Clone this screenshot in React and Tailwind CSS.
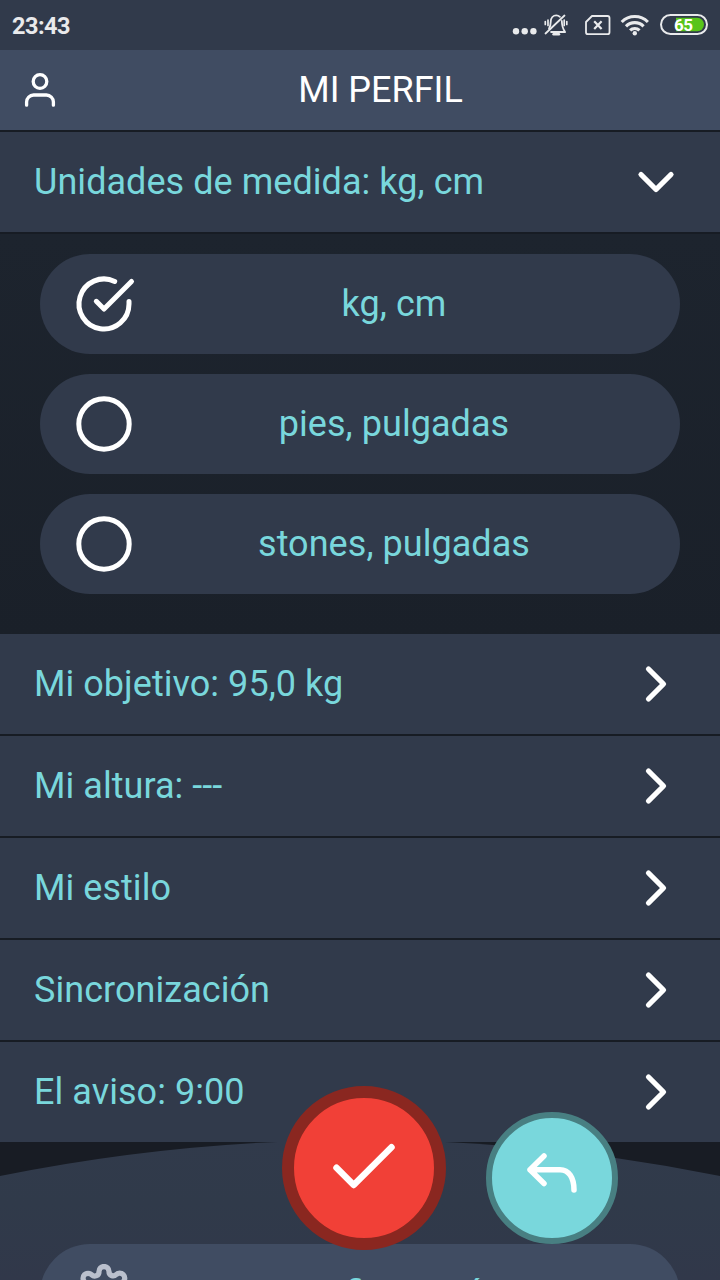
import { ChevronDown, ChevronRight } from 'lucide-react';
import { FiSettings } from 'react-icons/fi';

const options = [
  { label: 'kg, cm', checked: true },
  { label: 'pies, pulgadas', checked: false },
  { label: 'stones, pulgadas', checked: false },
];

const rows = ['Mi objetivo: 95,0 kg', 'Mi altura: ---', 'Mi estilo', 'Sincronización', 'El aviso: 9:00'];

function StatusBar() {
  return (
    <div className="h-[50px] shrink-0 flex items-center justify-between px-3 bg-[#313a4b] text-[#e9eaec]">
      <span className="text-[23.5px] font-bold leading-none tracking-[-0.5px] pt-1">23:43</span>
      <svg width="196" height="50" viewBox="512 0 196 50" fill="none" stroke="#e9eaec" strokeWidth="1.8" strokeLinecap="round" strokeLinejoin="round">
        <g fill="#e9eaec" stroke="none">
          <circle cx="516" cy="31.3" r="3.2" />
          <circle cx="524.7" cy="31.3" r="3.2" />
          <circle cx="533.4" cy="31.3" r="3.2" />
        </g>
        <path d="M549 28.5c1.5-2 1.7-4 1.7-6.5c0-4 2.5-6.6 5.6-6.6c1.4 0 2.6.5 3.6 1.4M561.8 21c.1 4 .3 7 3.3 11h-14" />
        <path d="M564.5 15.5L545.5 33.5" />
        <path d="M553.5 34.2h5.500" strokeWidth="2.4" />
        <path d="M545.3 21.5v3M548 20v5.5M564.2 20v5.5M566.8 21.5v3" strokeWidth="1.7" />
        <path d="M592 16h15.5a2 2 0 0 1 2 2v14.2a2 2 0 0 1-2 2h-19.500a2 2 0 0 1-2-2v-10.200z" />
        <path d="M594.2 21.2l7.4 7.8M601.6 21.2l-7.4 7.8" strokeWidth="2.2" strokeLinecap="butt" />
        <g strokeWidth="3.1" strokeLinecap="butt">
          <path d="M621.7 22a18.5 18.5 0 0 1 26.2 0" />
          <path d="M626 26.3a12.3 12.3 0 0 1 17.6 0" />
          <path d="M630.1 30.4a6.6 6.6 0 0 1 9.4 0" />
        </g>
        <circle cx="634.8" cy="33.2" r="2.2" fill="#e9eaec" stroke="none" />
        <rect x="661" y="15" width="46" height="19" rx="9.5" strokeWidth="2" />
        <path d="M676 17.8h21.3a6.7 6.7 0 0 1 0 13.4h-21.3z" fill="#58c41a" stroke="none" />
        <text x="683.3" y="30.8" textAnchor="middle" fontSize="17" fontWeight="700" letterSpacing="-0.4" fill="#fff" stroke="none">65</text>
      </svg>
    </div>
  );
}

function Header() {
  return (
    <header className="h-[82px] shrink-0 grid grid-cols-[80px_1fr_39px] items-center bg-[#404c62] border-b-2 border-[#171c24]">
      <svg className="ml-5" width="40" height="40" viewBox="0 0 40 40" fill="none" stroke="#fff" strokeWidth="3.3" strokeLinecap="round">
        <circle cx="20" cy="11.5" r="6.8" />
        <path d="M6.6 35.2v-3.2a7 7 0 0 1 7-7h12.8a7 7 0 0 1 7 7v3.2" />
      </svg>
      <h1 className="text-center text-[36px] leading-none text-white">MI PERFIL</h1>
    </header>
  );
}

function Row({ label, open }) {
  const Icon = open ? ChevronDown : ChevronRight;
  return (
    <div className="h-[102px] shrink-0 flex items-center justify-between px-[34px] bg-[#313a4b] border-b-2 border-[#171c24] last:h-[100px] last:border-b-0">
      <span className="text-[36px] leading-none tracking-[0.05px] text-[#79d7dc]">{label}</span>
      <Icon size={60} color="#fff" strokeWidth={2.1} />
    </div>
  );
}

function Option({ label, checked }) {
  return (
    <div className="h-[100px] flex items-center rounded-full bg-[#313a4b] pl-8 pr-7">
      <svg width="64" height="64" viewBox="0 0 64 64" fill="none" stroke="#fff" strokeWidth="5" strokeLinecap="round" strokeLinejoin="round">
        {checked ? (
          <>
            <path d="M57 29.5V32a25 25 0 1 1-14.3-22.6" />
            <path d="M24.3 29.3l7.7 7.7L59.5 9.5" />
          </>
        ) : (
          <circle cx="32" cy="32" r="25.2" />
        )}
      </svg>
      <span className="flex-1 text-center text-[36px] leading-none tracking-[0.05px] text-[#79d7dc]">{label}</span>
    </div>
  );
}

function BottomMenu() {
  return (
    <div className="relative h-[138px] shrink-0 px-10 pt-[102px] bg-[#181c24]">
      <svg className="absolute left-0 top-[-2px]" width="720" height="140" viewBox="0 0 720 140">
        <defs>
          <linearGradient id="hill" x1="0" y1="0" x2="0" y2="1">
            <stop offset="0" stopColor="#313a4b" />
            <stop offset="0.45" stopColor="#303a4a" />
            <stop offset="1" stopColor="#31384a" />
          </linearGradient>
        </defs>
        <path d="M0 36A1818 1818 0 0 1 720 36V140H0z" fill="url(#hill)" />
      </svg>
      <div className="relative h-[100px] rounded-full bg-[#404c62] flex items-center pl-[34px] pr-7">
        <FiSettings size={60} color="#bac0cd" strokeWidth={2.1} />
        <span className="flex-1 text-center text-[36px] leading-none text-[#79d7dc]">Configuración</span>
      </div>
    </div>
  );
}

export default function App() {
  return (
    <div className="relative w-[720px] h-[1280px] overflow-hidden flex flex-col bg-[#181c24] font-['Roboto',sans-serif]">
      <StatusBar />
      <Header />
      <Row label="Unidades de medida: kg, cm" open />
      <div className="h-[400px] shrink-0 flex flex-col gap-5 px-10 pt-5 bg-linear-to-b from-[#1d242e] to-[#1a2029]">
        {options.map(o => (
          <Option key={o.label} {...o} />
        ))}
      </div>
      <div className="shrink-0">
        {rows.map(label => (
          <Row key={label} label={label} />
        ))}
      </div>
      <BottomMenu />

      <button className="absolute left-[282px] top-[1086px] size-[164px] rounded-full border-12 border-[#8a2720] bg-[#f14037]">
        <svg width="140" height="140" viewBox="0 0 140 140" fill="none" stroke="#fff" strokeWidth="6.5" strokeLinecap="round" strokeLinejoin="round">
          <path d="M42.5 69.7L59.7 87L97.5 49.2" />
        </svg>
      </button>
      <button className="absolute left-[486px] top-[1112px] size-[132px] rounded-full border-6 border-[#487f82] bg-[#79d7dc]">
        <svg width="120" height="120" viewBox="0 0 120 120" fill="none" stroke="#fff" strokeWidth="5.5" strokeLinecap="round" strokeLinejoin="round">
          <path d="M52 38L38 51.7L52 65.5M38 51.7H68C77 51.7 82 60 82 72" />
        </svg>
      </button>
    </div>
  );
}
